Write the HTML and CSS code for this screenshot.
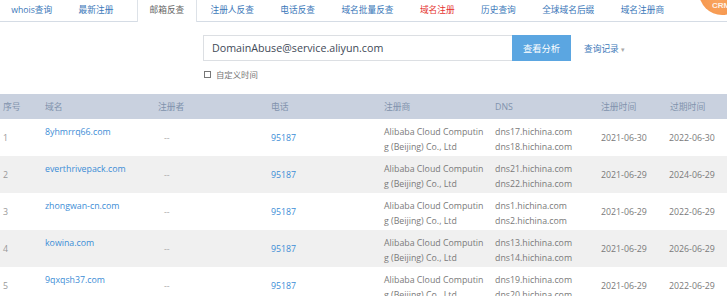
FILE: index.html
```html
<!DOCTYPE html>
<html lang="zh-CN">
<head>
<meta charset="utf-8">
<title>邮箱反查</title>
<link rel="stylesheet" href="styles.css">
</head>
<body>
<div class="page">
  <nav class="tabs">
    <a class="tab first">whois查询</a>
    <a class="tab">最新注册</a>
    <a class="tab active">邮箱反查</a>
    <a class="tab">注册人反查</a>
    <a class="tab">电话反查</a>
    <a class="tab">域名批量反查</a>
    <a class="tab red">域名注册</a>
    <a class="tab">历史查询</a>
    <a class="tab">全球域名后缀</a>
    <a class="tab">域名注册商</a>
    <span class="crm"><span class="crm-text">CRM</span></span>
  </nav>

  <div class="search">
    <div class="search-row">
      <div class="input">DomainAbuse@service.aliyun.com</div>
      <button class="btn">查看分析</button>
      <a class="history">查询记录 <span class="caret">▾</span></a>
    </div>
    <label class="custom"><span class="box"></span>自定义时间</label>
  </div>

  <div class="table">
    <div class="row head">
      <div class="c">序号</div>
      <div class="c">域名</div>
      <div class="c">注册者</div>
      <div class="c">电话</div>
      <div class="c">注册商</div>
      <div class="c">DNS</div>
      <div class="c">注册时间</div>
      <div class="c">过期时间</div>
    </div>

    <div class="row">
      <div class="c mid num">1</div>
      <div class="c top"><a class="link">8yhmrrq66.com</a></div>
      <div class="c mid dash">--</div>
      <div class="c mid"><a class="link">95187</a></div>
      <div class="c top txt"><div class="reg">Alibaba Cloud Computing (Beijing) Co., Ltd</div></div>
      <div class="c top txt">dns17.hichina.com<br>dns18.hichina.com</div>
      <div class="c mid txt">2021-06-30</div>
      <div class="c mid txt last">2022-06-30</div>
    </div>

    <div class="row alt">
      <div class="c mid num">2</div>
      <div class="c top"><a class="link">everthrivepack.com</a></div>
      <div class="c mid dash">--</div>
      <div class="c mid"><a class="link">95187</a></div>
      <div class="c top txt"><div class="reg">Alibaba Cloud Computing (Beijing) Co., Ltd</div></div>
      <div class="c top txt">dns21.hichina.com<br>dns22.hichina.com</div>
      <div class="c mid txt">2021-06-29</div>
      <div class="c mid txt last">2024-06-29</div>
    </div>

    <div class="row">
      <div class="c mid num">3</div>
      <div class="c top"><a class="link">zhongwan-cn.com</a></div>
      <div class="c mid dash">--</div>
      <div class="c mid"><a class="link">95187</a></div>
      <div class="c top txt"><div class="reg">Alibaba Cloud Computing (Beijing) Co., Ltd</div></div>
      <div class="c top txt">dns1.hichina.com<br>dns2.hichina.com</div>
      <div class="c mid txt">2021-06-29</div>
      <div class="c mid txt last">2022-06-29</div>
    </div>

    <div class="row alt">
      <div class="c mid num">4</div>
      <div class="c top"><a class="link">kowina.com</a></div>
      <div class="c mid dash">--</div>
      <div class="c mid"><a class="link">95187</a></div>
      <div class="c top txt"><div class="reg">Alibaba Cloud Computing (Beijing) Co., Ltd</div></div>
      <div class="c top txt">dns13.hichina.com<br>dns14.hichina.com</div>
      <div class="c mid txt">2021-06-29</div>
      <div class="c mid txt last">2026-06-29</div>
    </div>

    <div class="row">
      <div class="c mid num">5</div>
      <div class="c top"><a class="link">9qxqsh37.com</a></div>
      <div class="c mid dash">--</div>
      <div class="c mid"><a class="link">95187</a></div>
      <div class="c top txt"><div class="reg">Alibaba Cloud Computing (Beijing) Co., Ltd</div></div>
      <div class="c top txt">dns19.hichina.com<br>dns20.hichina.com</div>
      <div class="c mid txt">2021-06-29</div>
      <div class="c mid txt last">2022-06-29</div>
    </div>
  </div>
</div>
</body>
</html>
```

FILE: styles.css
```css
html, body {
  margin: 0;
  padding: 0;
  background: #fff;
  overflow: hidden;
}
body {
  font-family: "Open Sans", "Noto Sans CJK SC", sans-serif;
  font-size: 8.8px;
  color: #777;
}
.page {
  width: 727px;
  height: 296px;
  overflow: hidden;
  position: relative;
}

/* nav tabs */
.tabs {
  display: flex;
  height: 21px;
  border-bottom: 1px solid #d5dce5;
  position: relative;
}
.tab {
  display: block;
  padding: 0 13.2px;
  line-height: 21px;
  color: #3b78b9;
  white-space: nowrap;
  font-size: 8.7px;
}
.tab.first { margin-left: -2px; }
.tab.active {
  margin-left: 10px;
  padding: 0 12px;
  color: #666;
  background: #fff;
  border-left: 1px solid #dde2e8;
  border-right: 1px solid #dde2e8;
  height: 22px;
}
.tab.red { color: #e5332f; }
.crm {
  position: absolute;
  left: 699px;
  top: -31px;
  width: 46px;
  height: 46px;
  border-radius: 50%;
  background: radial-gradient(circle at 40% 70%, #f9a45e, #f2873a);
}
.crm-text {
  position: absolute;
  left: 13px;
  top: 32px;
  color: #fff;
  font-size: 8px;
  font-weight: bold;
  line-height: 10px;
  font-family: "Liberation Sans", sans-serif;
  opacity: 0.85;
}

/* search */
.search {
  padding-left: 203px;
  margin-top: 13px;
}
.search-row {
  display: flex;
  align-items: center;
  height: 26px;
}
.input {
  box-sizing: border-box;
  width: 309px;
  height: 26px;
  border: 1px solid #dcdfe3;
  border-right: none;
  padding-left: 8px;
  line-height: 24px;
  font-size: 10.7px;
  color: #3f4a57;
}
.btn {
  box-sizing: border-box;
  width: 59px;
  height: 26px;
  border: none;
  background: #5ba6e1;
  color: #fff;
  font-family: inherit;
  font-size: 9.3px;
  padding: 0;
}
.history {
  margin-left: 13px;
  color: #3b78b9;
  font-size: 8.7px;
}
.caret {
  color: #aaa;
  font-size: 7px;
}
.custom {
  display: flex;
  align-items: center;
  margin-top: 7px;
  height: 12px;
  color: #777;
  font-size: 8.4px;
}
.box {
  box-sizing: border-box;
  width: 7px;
  height: 7px;
  border: 1px solid #777;
  margin-left: 1px;
  margin-right: 5px;
}

/* table */
.table {
  margin-top: 14px;
  width: 747px;
}
.row {
  display: grid;
  grid-template-columns: 42px 113px 113px 113px 111px 106px 69px 80px;
  height: 37px;
}
.row.head {
  height: 25px;
  background: #c9d1df;
  color: #8193ad;
  align-items: center;
}
.row.alt { background: #f0f0f0; }
.c {
  padding-left: 3px;
  white-space: nowrap;
}
.top {
  padding-top: 6px;
  line-height: 15px;
}
.mid {
  align-self: center;
  padding-top: 1px;
}
.num { color: #999; }
.dash { color: #aaa; padding-left: 9px; }
.link { color: #3c8dd6; }
.txt { color: #7a7a7a; }
.last { padding-left: 2px; }
.reg {
  width: 104px;
  white-space: normal;
  word-break: break-all;
}
```
